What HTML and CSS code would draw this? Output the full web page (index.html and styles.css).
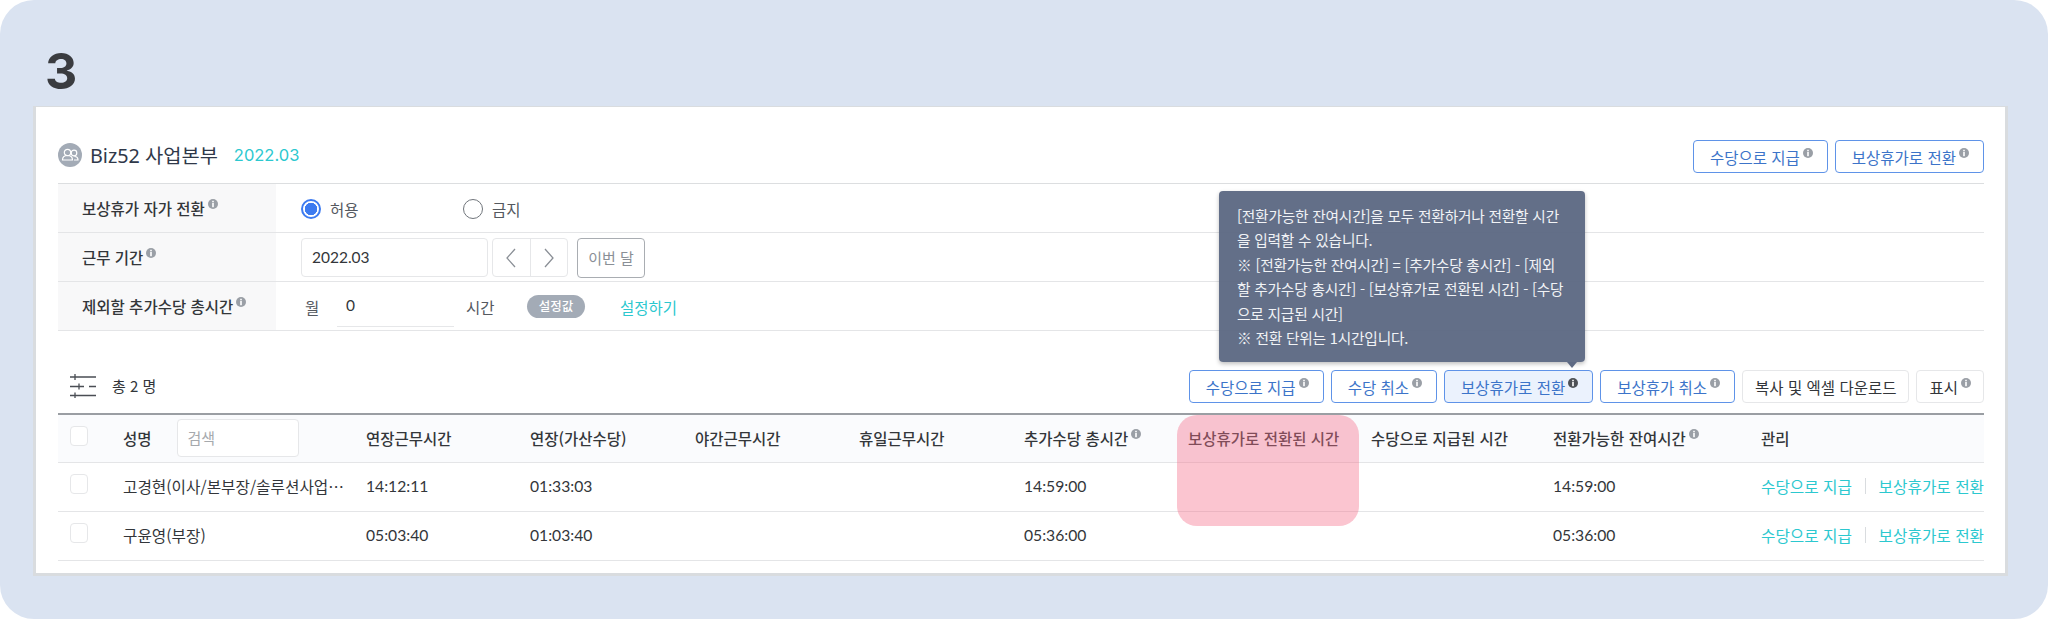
FILE: index.html
```html
<!DOCTYPE html>
<html lang="ko">
<head>
    <meta charset="UTF-8">
    <meta name="viewport" content="width=device-width, initial-scale=1.0">
    <title>보상휴가 전환</title>
    <link rel="stylesheet" href="styles.css">
</head>
<body>
    <svg class="defs" width="0" height="0">
        <symbol id="info" viewBox="0 0 10 10">
            <circle cx="5" cy="5" r="5" fill="currentColor"/>
            <rect x="4.2" y="1.8" width="1.6" height="1.5" fill="#fff"/>
            <rect x="4.2" y="4" width="1.6" height="4.2" fill="#fff"/>
        </symbol>
    </svg>
    <div class="frame">
        <div class="step">3</div>
        <div class="card">
            <div class="title-row">
                <div class="title">
                    <svg class="team-icon" width="24" height="24" viewBox="0 0 24 24">
                        <circle cx="12" cy="12" r="12" fill="#a3abb6"/>
                        <g fill="none" stroke="#fff" stroke-width="1.2">
                            <circle cx="9.5" cy="9.5" r="3.2"/>
                            <path d="M4.500 17c0-3 2.200-4.500 5-4.500s5 1.500 5 4.500z"/>
                            <circle cx="16" cy="10" r="2.800"/>
                            <path d="M16.500 13.500c2 0 3.500 1.300 3.500 3.500h-4"/>
                        </g>
                    </svg>
                    <span class="dept">Biz52 사업본부</span>
                    <span class="month">2022.03</span>
                </div>
                <div class="btn-group">
                    <button class="btn">수당으로 지급<svg class="info"><use href="#info"/></svg></button>
                    <button class="btn">보상휴가로 전환<svg class="info"><use href="#info"/></svg></button>
                </div>
            </div>

            <div class="form-row">
                <div class="form-label">보상휴가 자가 전환<svg class="info"><use href="#info"/></svg></div>
                <div class="form-value">
                    <span class="radio on"></span><span class="radio-text radio-first">허용</span>
                    <span class="radio"></span><span class="radio-text">금지</span>
                </div>
            </div>
            <div class="form-row">
                <div class="form-label">근무 기간<svg class="info"><use href="#info"/></svg></div>
                <div class="form-value">
                    <div class="month-input">2022.03</div>
                    <div class="pager">
                        <span class="pager-btn"><svg width="12" height="22" viewBox="0 0 12 22"><path d="M10 2 2 11l8 9" fill="none" stroke="#8a8f96" stroke-width="1.300"/></svg></span>
                        <span class="pager-btn"><svg width="12" height="22" viewBox="0 0 12 22"><path d="M2 2l8 9-8 9" fill="none" stroke="#8a8f96" stroke-width="1.300"/></svg></span>
                    </div>
                    <div class="this-month">이번 달</div>
                </div>
            </div>
            <div class="form-row">
                <div class="form-label">제외할 추가수당 총시간<svg class="info"><use href="#info"/></svg></div>
                <div class="form-value">
                    <span class="unit-month">월</span>
                    <div class="hour-input">0</div>
                    <span class="unit-hour">시간</span>
                    <span class="pill">설정값</span>
                    <a class="link set-link">설정하기</a>
                </div>
            </div>

            <div class="toolbar">
                <div class="total">
                    <svg width="26" height="24" viewBox="0 0 26 24">
                        <path d="M0 3h26M5 0v6M0 12.500h14M19 12.500h7M9 9.500v6M0 21.500h26M5 18.500v6" fill="none" stroke="#4a4e54" stroke-width="1.300"/>
                    </svg>
                    <span>총 2 명</span>
                </div>
                <div class="btn-group">
                    <button class="btn">수당으로 지급<svg class="info"><use href="#info"/></svg></button>
                    <button class="btn">수당 취소<svg class="info"><use href="#info"/></svg></button>
                    <button class="btn active">보상휴가로 전환<svg class="info dark"><use href="#info"/></svg></button>
                    <button class="btn">보상휴가 취소<svg class="info"><use href="#info"/></svg></button>
                    <button class="btn plain">복사 및 엑셀 다운로드</button>
                    <button class="btn plain">표시<svg class="info"><use href="#info"/></svg></button>
                </div>
            </div>

            <table class="grid">
                <colgroup>
                    <col class="c-check"><col class="c-name"><col class="c-a"><col class="c-b"><col class="c-a"><col class="c-b"><col class="c-a">
                    <col class="c-wide"><col class="c-wide2"><col class="c-remain"><col class="c-manage">
                </colgroup>
                <thead>
                    <tr>
                        <th><span class="check"></span></th>
                        <th><div class="name-head">성명<div class="search">검색</div></div></th>
                        <th>연장근무시간</th>
                        <th>연장(가산수당)</th>
                        <th>야간근무시간</th>
                        <th>휴일근무시간</th>
                        <th>추가수당 총시간<svg class="info"><use href="#info"/></svg></th>
                        <th>보상휴가로 전환된 시간</th>
                        <th>수당으로 지급된 시간</th>
                        <th>전환가능한 잔여시간<svg class="info"><use href="#info"/></svg></th>
                        <th>관리</th>
                    </tr>
                </thead>
                <tbody>
                    <tr>
                        <td><span class="check"></span></td>
                        <td class="name">고경현(이사/본부장/솔루션사업…</td>
                        <td>14:12:11</td>
                        <td>01:33:03</td>
                        <td></td>
                        <td></td>
                        <td>14:59:00</td>
                        <td></td>
                        <td></td>
                        <td>14:59:00</td>
                        <td><div class="actions"><a class="link">수당으로 지급</a><i class="sep"></i><a class="link">보상휴가로 전환</a></div></td>
                    </tr>
                    <tr>
                        <td><span class="check"></span></td>
                        <td class="name">구윤영(부장)</td>
                        <td>05:03:40</td>
                        <td>01:03:40</td>
                        <td></td>
                        <td></td>
                        <td>05:36:00</td>
                        <td></td>
                        <td></td>
                        <td>05:36:00</td>
                        <td><div class="actions"><a class="link">수당으로 지급</a><i class="sep"></i><a class="link">보상휴가로 전환</a></div></td>
                    </tr>
                </tbody>
            </table>

            <div class="tooltip">
                [전환가능한 잔여시간]을 모두 전환하거나 전환할 시간<br>
                을 입력할 수 있습니다.<br>
                ※ [전환가능한 잔여시간] = [추가수당 총시간] - [제외<br>
                할 추가수당 총시간] - [보상휴가로 전환된 시간] - [수당<br>
                으로 지급된 시간]<br>
                ※ 전환 단위는 1시간입니다.
            </div>
            <div class="highlight"></div>
        </div>
    </div>
</body>
</html>
```

FILE: styles.css
```css
* {
    box-sizing: border-box;
}
body {
    margin: 0;
    background: #fff;
    color: #33363a;
    font-family: 'Lato', 'Noto Sans CJK KR', sans-serif;
    font-size: 15px;
}
.defs {
    position: absolute;
}
.frame {
    width: 2048px;
    height: 619px;
    overflow: hidden;
    background: #dae3f1;
    border-radius: 34px;
    padding-left: 33px;
}
.step {
    height: 106px;
    padding: 41px 0 0 12px;
    font-family: 'Inter', sans-serif;
    font-size: 50px;
    font-weight: 700;
    line-height: 60px;
    color: #3a3c40;
}
.card {
    position: relative;
    width: 1975px;
    height: 470px;
    background: #fff;
    border: solid #d9dcdf;
    border-width: 1px 3px 3px;
    padding: 0 21px 0 22px;
}

/* title */
.title-row {
    display: flex;
    justify-content: space-between;
    align-items: flex-end;
    height: 77px;
    padding-bottom: 10px;
    border-bottom: 1px solid #dcdee0;
}
.title {
    display: flex;
    align-items: center;
    gap: 8px;
    height: 33px;
    margin-bottom: 2px;
}
.dept {
    font-family: 'Noto Sans', 'Noto Sans CJK KR', sans-serif;
    font-size: 19.800px;
    color: #2f3849;
}
.month {
    margin-left: 8px;
    font-family: 'Inter', sans-serif;
    font-size: 16.500px;
    color: #2cc8cf;
}

/* buttons */
.btn-group {
    display: flex;
    gap: 7px;
}
.btn {
    height: 33px;
    padding: 0 14px 0 16px;
    background: #fff;
    border: 1px solid #5f93e8;
    border-radius: 4px;
    color: #3c74c9;
    font-family: 'Noto Sans CJK KR', sans-serif;
    font-size: 15.500px;
    white-space: nowrap;
}
.btn.active {
    background: #ebf2fd;
}
.btn.plain {
    padding: 0 12px;
    border-color: #e6e7e9;
    color: #33363a;
}
.info {
    width: 10px;
    height: 10px;
    margin-left: 3px;
    vertical-align: 6px;
    color: #9a9fa6;
}
.info.dark {
    color: #4d5156;
}

/* settings rows */
.form-row {
    display: flex;
    height: 49px;
    border-bottom: 1px solid #e4e5e7;
}
.form-label {
    width: 218px;
    padding-left: 24px;
    background: #f8f8f9;
    line-height: 48px;
    font-family: 'Noto Sans CJK KR', sans-serif;
    font-size: 15.500px;
    font-weight: 500;
}
.form-value {
    display: flex;
    align-items: center;
    padding: 1px 0 0 25px;
    font-family: 'Noto Sans CJK KR', sans-serif;
    font-size: 15.500px;
    color: #55595f;
}
.radio {
    width: 20px;
    height: 20px;
    margin-right: 9px;
    border: 1px solid #70757b;
    border-radius: 50%;
}
.radio.on {
    border: 2px solid #3d7bf0;
    background: radial-gradient(circle, #3d7bf0 0 6px, #fff 6.500px);
}
.radio-first {
    width: 133px;
}
.month-input {
    width: 187px;
    height: 39px;
    margin-right: 4px;
    padding-left: 10px;
    border: 1px solid #e6e7e9;
    border-radius: 4px;
    line-height: 37px;
    font-family: 'Lato', sans-serif;
    color: #33363a;
}
.pager {
    display: flex;
    width: 76px;
    height: 39px;
    margin-right: 9px;
    border: 1px solid #e6e7e9;
    border-radius: 4px;
}
.pager-btn {
    display: flex;
    flex: 1;
    align-items: center;
    justify-content: center;
}
.pager-btn + .pager-btn {
    border-left: 1px solid #e6e7e9;
}
.this-month {
    width: 68px;
    height: 40px;
    border: 1px solid #a9adb2;
    border-radius: 4px;
    text-align: center;
    line-height: 37px;
    font-size: 15px;
    color: #8a8f96;
}
.unit-month {
    width: 36px;
    padding-left: 4px;
}
.hour-input {
    width: 117px;
    height: 40px;
    margin-top: 1px;
    padding-left: 9px;
    border-bottom: 1px solid #e6e7e9;
    line-height: 37px;
    font-family: 'Lato', sans-serif;
    color: #33363a;
}
.unit-hour {
    margin-left: 12px;
    width: 61px;
}
.pill {
    width: 58px;
    height: 23px;
    background: #a3abb6;
    border-radius: 12px;
    text-align: center;
    line-height: 22px;
    font-size: 12.500px;
    font-weight: 500;
    color: #fff;
}
.link {
    color: #2cc8cf;
    font-family: 'Noto Sans CJK KR', sans-serif;
    white-space: nowrap;
}
.set-link {
    margin-left: 35px;
}

/* toolbar */
.toolbar {
    display: flex;
    justify-content: space-between;
    height: 33px;
    margin-top: 39px;
}
.total {
    display: flex;
    align-items: center;
    gap: 16px;
    padding: 0 0 2px 12px;
    font-family: 'Noto Sans CJK KR', sans-serif;
    font-size: 15px;
}

/* table */
.grid {
    width: 1926px;
    margin-top: 10px;
    table-layout: fixed;
    border-collapse: collapse;
    border-top: 2px solid #9a9ea3;
}
.c-check { width: 65px; }
.c-name { width: 243px; }
.c-a { width: 164px; }
.c-b { width: 165px; }
.c-wide { width: 183px; }
.c-wide2 { width: 182px; }
.c-remain { width: 208px; }
.c-manage { width: 223px; }
.grid th {
    height: 48px;
    padding: 0;
    background: #fafbfd;
    border-bottom: 1px solid #e4e5e7;
    text-align: left;
    font-family: 'Noto Sans CJK KR', sans-serif;
    font-size: 15.500px;
    font-weight: 500;
    white-space: nowrap;
}
.grid td {
    height: 49px;
    padding: 0 0 1px;
    border-bottom: 1px solid #e4e5e7;
    font-size: 15.700px;
}
.grid td.name {
    font-family: 'Noto Sans CJK KR', sans-serif;
    white-space: nowrap;
}
.check {
    display: block;
    width: 18px;
    height: 20px;
    margin: 0 0 5px 12px;
    background: #fff;
    border: 1px solid #e6e7e9;
    border-radius: 4px;
}
.name-head {
    display: flex;
    align-items: center;
    gap: 25px;
}
.search {
    width: 122px;
    height: 38px;
    padding-left: 10px;
    background: #fff;
    border: 1px solid #e6e7e9;
    border-radius: 4px;
    line-height: 36px;
    font-size: 15px;
    font-weight: 400;
    color: #a6a9ad;
}
.actions {
    display: flex;
    align-items: center;
}
.sep {
    width: 1px;
    height: 16px;
    margin: 0 13px;
    background: #d9dcdf;
}

/* overlays */
.tooltip {
    position: absolute;
    left: 1183px;
    top: 84px;
    width: 366px;
    height: 171px;
    padding: 13px 18px;
    background: rgba(93, 105, 131, .96);
    border-radius: 4px;
    box-shadow: 0 2px 4px rgba(0, 0, 0, .25);
    font-family: 'Noto Sans CJK KR', sans-serif;
    font-size: 14.700px;
    line-height: 24.400px;
    letter-spacing: -.2px;
    color: #f1f3f6;
    white-space: nowrap;
}
.tooltip::after {
    content: "";
    position: absolute;
    right: 8px;
    bottom: -6px;
    border: solid transparent;
    border-width: 6px 5px 0;
    border-top-color: #5d6983;
}
.highlight {
    position: absolute;
    left: 1141px;
    top: 308px;
    width: 182px;
    height: 111px;
    background: rgba(244, 110, 138, .4);
    border-radius: 20px;
}
```
